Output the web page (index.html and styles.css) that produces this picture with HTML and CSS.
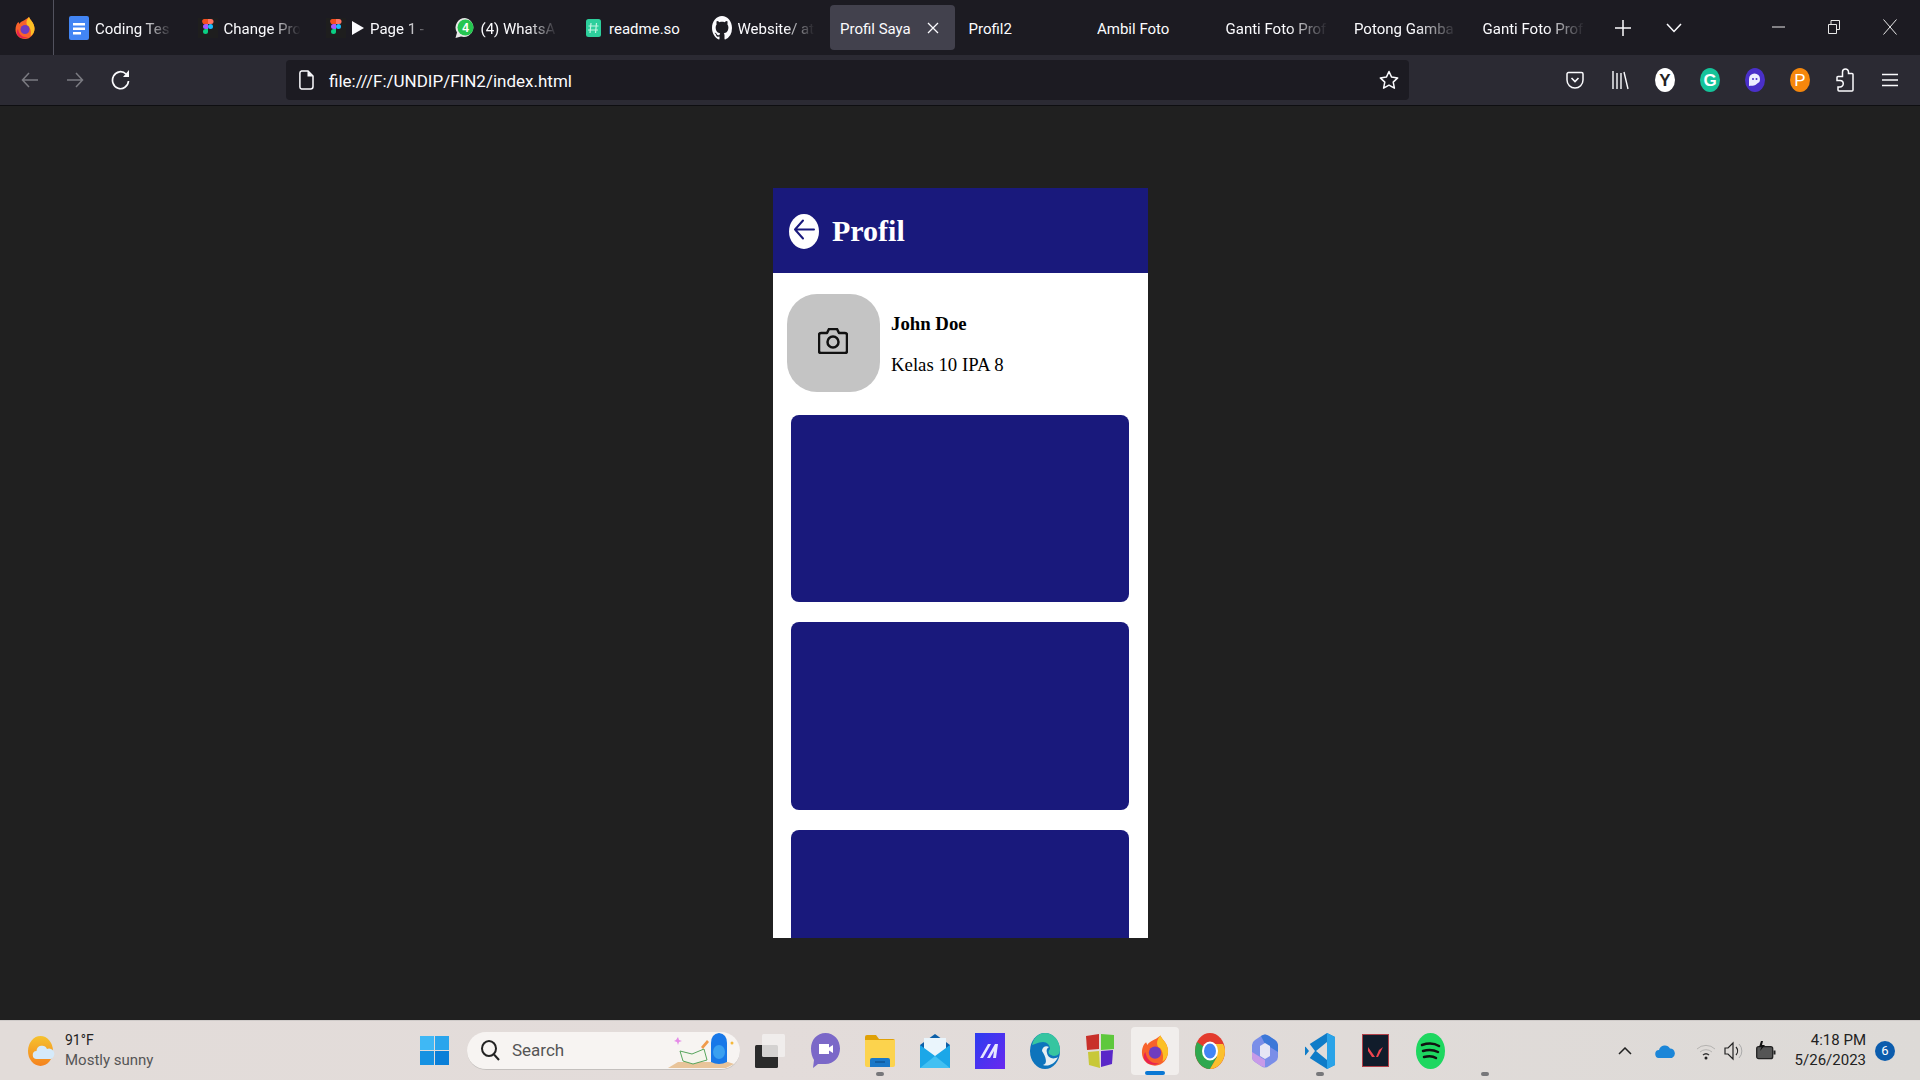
FILE: index.html
```html
<!DOCTYPE html>
<html lang="en">
<head>
    <meta charset="UTF-8">
    <meta name="viewport" content="width=device-width, initial-scale=1.0">
    <title>Profil Saya</title>
    <link rel="stylesheet" href="styles.css">
</head>
<body>
    <div class="screen">
        <!-- tab strip -->
        <div class="tabstrip">
            <div class="ff-slot">
                <svg width="20" height="24" viewBox="0 0 20 24"><path d="M14 1c1 3 5 5 5.500 11 .3 6-4 11-9.500 11S.5 19 .5 13.500C.5 10 2 7 3.500 6l1 2c1-3 5-3 9.500-7z" fill="#f8622b"/><path d="M14 1c1 3 5 5 5.500 11 .3 4-2 7-4 8 1-4 0-9-3-10.500C11 8 11 4 14 1z" fill="#fcc025"/><circle cx="10" cy="13.500" r="4.500" fill="#6f3cc0"/><path d="M3 13c1 6 5 9 10 8-3 2.500-9 1.500-11-3-.6-2 0-4 1-5z" fill="#e8234f"/></svg>
            </div>
            <div class="tab">
                <svg class="favicon" width="20" height="24" viewBox="0 0 20 24"><rect width="20" height="24" rx="2" fill="#4285f4"/><path d="M4 7h12v2.500H4zM4 11.500h12V14H4zM4 16h8v2.500H4z" fill="#fff"/></svg>
                <span class="tab-title fade">Coding Tes</span>
            </div>
            <div class="tab">
                <svg class="favicon" width="20" height="20" viewBox="0 0 20 20"><rect width="20" height="20" fill="#1e1e1e"/><path d="M6 1h4v5H7.500A2.500 2.500 0 016 1z" fill="#f24e1e"/><path d="M10 1h3a2.500 2.500 0 010 5h-3z" fill="#ff7262"/><path d="M7.500 6H10v5H7.500a2.500 2.500 0 010-5z" fill="#a259ff"/><circle cx="12.500" cy="8.500" r="2.500" fill="#1abcfe"/><path d="M7.500 11H10v2.500a2.500 2.500 0 11-2.500-2.500z" fill="#0acf83"/></svg>
                <span class="tab-title fade">Change Pro</span>
            </div>
            <div class="tab">
                <svg class="favicon" width="20" height="20" viewBox="0 0 20 20"><rect width="20" height="20" fill="#1e1e1e"/><path d="M6 1h4v5H7.500A2.500 2.500 0 016 1z" fill="#f24e1e"/><path d="M10 1h3a2.500 2.500 0 010 5h-3z" fill="#ff7262"/><path d="M7.500 6H10v5H7.500a2.500 2.500 0 010-5z" fill="#a259ff"/><circle cx="12.500" cy="8.500" r="2.500" fill="#1abcfe"/><path d="M7.500 11H10v2.500a2.500 2.500 0 11-2.500-2.500z" fill="#0acf83"/></svg>
                <svg class="play" width="12" height="14" viewBox="0 0 12 14"><path d="M0 0l12 7-12 7z" fill="#fbfbfe"/></svg>
                <span class="tab-title fade">Page 1 -</span>
            </div>
            <div class="tab">
                <svg class="favicon" width="20" height="24" viewBox="0 0 20 24"><path d="M10 2a9.500 9.500 0 00-8 14.500L.5 22l5.500-1.500A9.500 9.500 0 1010 2z" fill="#e8e8e8"/><circle cx="10.500" cy="11.500" r="8" fill="#25c650"/><text x="10.500" y="16" class="wa-count">4</text></svg>
                <span class="tab-title fade">(4) WhatsA</span>
            </div>
            <div class="tab">
                <svg class="favicon favicon-readme" width="15" height="18" viewBox="0 0 15 18"><rect width="15" height="18" rx="2.500" fill="#2dcf9c"/><path d="M5 4l-1 10M10.500 4l-1 10M2.500 7h10M2 11h10" stroke="#bff3df" stroke-width="1.200" fill="none"/></svg>
                <span class="tab-title">readme.so</span>
            </div>
            <div class="tab">
                <svg class="favicon" width="20" height="24" viewBox="0 0 16 16" preserveAspectRatio="none"><path fill="#fbfbfe" d="M8 0C3.580 0 0 3.580 0 8c0 3.540 2.290 6.530 5.470 7.590.4.070.55-.17.55-.38 0-.19-.01-.82-.01-1.490-2.010.37-2.530-.49-2.690-.94-.09-.23-.48-.94-.82-1.130-.28-.15-.68-.52-.01-.53.63-.01 1.080.58 1.230.82.72 1.210 1.870.87 2.330.66.070-.52.28-.87.51-1.070-1.780-.2-3.640-.89-3.640-3.950 0-.87.31-1.590.82-2.150-.08-.2-.36-1.020.08-2.120 0 0 .67-.21 2.200.82.64-.18 1.320-.27 2-.27.68 0 1.360.09 2 .27 1.530-1.040 2.200-.82 2.200-.82.44 1.100.16 1.920.08 2.120.51.56.82 1.270.82 2.150 0 3.070-1.870 3.750-3.650 3.950.29.25.54.73.54 1.480 0 1.070-.01 1.930-.01 2.200 0 .21.15.46.55.38A8.013 8.013 0 0016 8c0-4.420-3.580-8-8-8z"/></svg>
                <span class="tab-title fade">Website/ at</span>
            </div>
            <div class="tab active">
                <span class="tab-title">Profil Saya</span>
                <svg class="tab-close" width="12" height="12" viewBox="0 0 12 12"><path d="M1 1l10 10M11 1L1 11" stroke="#fbfbfe" stroke-width="1.300"/></svg>
            </div>
            <div class="tab"><span class="tab-title">Profil2</span></div>
            <div class="tab"><span class="tab-title">Ambil Foto</span></div>
            <div class="tab"><span class="tab-title fade">Ganti Foto Prof</span></div>
            <div class="tab"><span class="tab-title fade">Potong Gamba</span></div>
            <div class="tab"><span class="tab-title fade">Ganti Foto Prof</span></div>
            <div class="strip-btn"><svg width="16" height="16" viewBox="0 0 16 16"><path d="M8 0v16M0 8h16" stroke="#fbfbfe" stroke-width="1.500"/></svg></div>
            <div class="strip-btn chevron-btn"><svg width="16" height="10" viewBox="0 0 16 10"><path d="M1 1l7 7.500L15 1" stroke="#fbfbfe" stroke-width="1.500" fill="none"/></svg></div>
            <div class="win-btns">
                <div class="win-btn"><svg width="13" height="2" viewBox="0 0 13 2"><path d="M0 1h13" stroke="#e8e8e8" stroke-width="1"/></svg></div>
                <div class="win-btn"><svg width="12" height="14" viewBox="0 0 12 14"><path d="M.5 4.500h8v9h-8zM3 4.500V.5h8.500v9H8.500" stroke="#e8e8e8" fill="none"/></svg></div>
                <div class="win-btn"><svg width="14" height="16" viewBox="0 0 14 16"><path d="M.5.5l13 15M13.500.5L.5 15.500" stroke="#e8e8e8" fill="none"/></svg></div>
            </div>
        </div>

        <!-- toolbar -->
        <div class="toolbar">
            <div class="tool-btn"><svg width="18" height="18" viewBox="0 0 18 18"><path d="M17 9H1.500M8 2L1.500 9 8 16" stroke="#7b7b82" stroke-width="1.500" fill="none"/></svg></div>
            <div class="tool-btn"><svg width="18" height="18" viewBox="0 0 18 18"><path d="M1 9h15.500M10 2l6.500 7-6.500 7" stroke="#7b7b82" stroke-width="1.500" fill="none"/></svg></div>
            <div class="tool-btn"><svg width="19" height="22" viewBox="0 0 19 22"><path d="M15 5A8 8.500 0 1017.500 12" stroke="#fbfbfe" stroke-width="1.700" fill="none"/><path d="M18 1v7h-6z" fill="#fbfbfe"/></svg></div>
            <div class="urlbar">
                <svg width="15" height="20" viewBox="0 0 15 20"><path d="M2.500 1H9l5 5v10.500a2.500 2.500 0 01-2.500 2.500h-9A2 2 0 01.9 17V3A2 2 0 012.500 1z" stroke="#fbfbfe" stroke-width="1.500" fill="none"/><path d="M8.500 1v5.500H14" fill="#fbfbfe"/></svg>
                <span class="url-text">file:///F:/UNDIP/FIN2/index.html</span>
                <svg class="url-star" width="20" height="20" viewBox="0 0 20 20"><path d="M10 1.500l2.600 5.600 6.100.8-4.500 4.200 1.200 6.100L10 15.200l-5.400 3 1.200-6.100L1.300 7.900l6.100-.8z" stroke="#fbfbfe" stroke-width="1.500" stroke-linejoin="round" fill="none"/></svg>
            </div>
            <div class="tool-icons">
                <div class="tool-btn"><svg width="18" height="18" viewBox="0 0 18 18"><path d="M2.500 1.500h13A1.500 1.500 0 0117 3v6a8 8 0 01-16 0V3a1.500 1.500 0 011.500-1.500z" stroke="#fbfbfe" stroke-width="1.500" fill="none"/><path d="M5.500 7L9 10.500 12.500 7" stroke="#fbfbfe" stroke-width="1.600" fill="none"/></svg></div>
                <div class="tool-btn"><svg width="17" height="20" viewBox="0 0 17 20"><path d="M1 1v18M5 3v16M9 3v16M12 2l4 17" stroke="#fbfbfe" stroke-width="1.400" fill="none"/></svg></div>
                <div class="tool-btn"><svg width="20" height="24" viewBox="0 0 20 24"><ellipse cx="10" cy="12" rx="10" ry="12" fill="#fff"/><text x="10" y="18" class="ext-letter ext-dark">Y</text></svg></div>
                <div class="tool-btn"><svg width="20" height="24" viewBox="0 0 20 24"><ellipse cx="10" cy="12" rx="10" ry="12" fill="#15c39a"/><text x="10" y="18" class="ext-letter">G</text></svg></div>
                <div class="tool-btn"><svg width="20" height="24" viewBox="0 0 20 24"><ellipse cx="10" cy="12" rx="10" ry="12" fill="#4a30c9"/><path d="M4 18V11a5.500 5.500 0 0111 0c0 3-1 3.500-2 4-1 .6-2 2-4 2.500-2 .5-3.500 0-5 .5z" fill="#eef"/><circle cx="8" cy="11" r="1" fill="#4a30c9"/><circle cx="11.500" cy="11" r="1" fill="#4a30c9"/></svg></div>
                <div class="tool-btn"><svg width="20" height="24" viewBox="0 0 20 24"><ellipse cx="10" cy="12" rx="10" ry="12" fill="#f5870c"/><text x="10" y="18" class="ext-letter ext-thin">P</text></svg></div>
                <div class="tool-btn"><svg width="18" height="24" viewBox="0 0 18 24"><path d="M6.500 5.500V4a3 3 0 016 0v1.500H16a1 1 0 011 1V22a1 1 0 01-1 1H3a1 1 0 01-1-1v-3h2a3 3 0 000-6.500H1V9.500a1 1 0 011-1h4.500z" stroke="#fbfbfe" stroke-width="1.500" fill="none"/></svg></div>
                <div class="tool-btn"><svg width="16" height="14" viewBox="0 0 16 14"><path d="M0 1.500h16M0 7h16M0 12.500h16" stroke="#fbfbfe" stroke-width="1.600"/></svg></div>
            </div>
        </div>

        <!-- page content -->
        <main class="viewport">
            <div class="phone">
                <header class="phone-header">
                    <svg class="back-icon" width="30" height="35" viewBox="0 0 30 35"><ellipse cx="15" cy="17.500" rx="15" ry="17.500" fill="#fff"/><path d="M25 15.500H6M14 6.500l-8 9 8 9" stroke="#19197c" stroke-width="2" stroke-linecap="round" stroke-linejoin="round" fill="none"/></svg>
                    <h1>Profil</h1>
                </header>
                <section class="profile">
                    <div class="avatar">
                        <svg class="camera" width="30" height="26" viewBox="0 0 30 26"><path d="M3 5h6l2-4h8l2 4h6a2 2 0 012 2v16a2 2 0 01-2 2H3a2 2 0 01-2-2V7a2 2 0 012-2z" stroke="#111" stroke-width="2.500" stroke-linejoin="round" fill="none"/><circle cx="15" cy="14" r="5.500" stroke="#111" stroke-width="2.500" fill="none"/></svg>
                    </div>
                    <div class="profile-text">
                        <p class="name">John Doe</p>
                        <p class="kelas">Kelas 10 IPA 8</p>
                    </div>
                </section>
                <div class="cards">
                    <div class="card"></div>
                    <div class="card"></div>
                    <div class="card"></div>
                </div>
            </div>
        </main>

        <!-- taskbar -->
        <footer class="taskbar">
            <div class="weather">
                <svg width="28" height="30" viewBox="0 0 28 30"><defs><linearGradient id="sun" x1="0" y1="0" x2="0" y2="1"><stop offset="0" stop-color="#f5c22e"/><stop offset="1" stop-color="#f5821e"/></linearGradient></defs><ellipse cx="12.500" cy="15" rx="12.500" ry="15" fill="url(#sun)"/><path d="M9 23a4 4 0 01-.5-8 5.500 5.500 0 0110.500-2 5 5 0 014 10z" fill="#d5eafa"/></svg>
                <div class="weather-text">
                    <span class="temp">91°F</span>
                    <span class="sky">Mostly sunny</span>
                </div>
            </div>
            <div class="task-slot">
                <svg width="29" height="29" viewBox="0 0 29 29"><path d="M0 0h14v14H0z" fill="#3fb8f5"/><path d="M15 0h14v14H15z" fill="#2aa5ec"/><path d="M0 15h14v14H0z" fill="#1792e2"/><path d="M15 15h14v14H15z" fill="#0a7fd8"/></svg>
            </div>
            <div class="search">
                <svg width="19" height="21" viewBox="0 0 19 21"><ellipse cx="8" cy="8.500" rx="7" ry="7.500" stroke="#222" stroke-width="2" fill="none"/><path d="M13 14.500l5 5.500" stroke="#222" stroke-width="2"/></svg>
                <span class="search-text">Search</span>
                <svg class="search-art" width="68" height="38" viewBox="0 0 68 38"><path d="M0 37l10-6h50l6 2-8 4z" fill="#e8c49a"/><path d="M12 20l12 3 12-5 3 11-14 4-10-3z" fill="#f5f5ec" stroke="#58a55c"/><path d="M33 16l6-7 2 2-6 7z" fill="#f09a4a"/><path d="M8 9l2-3 1 3 3 1-3 1-1 3-1-3-3-1z" fill="#e58ae8"/><path d="M43 31V12q0-9 8-10 8 1 8 10v19q-8 4-16 0z" fill="#1878e8"/><ellipse cx="51" cy="21" rx="6" ry="7" fill="#3aa0f0"/><circle cx="64" cy="12" r="1.500" fill="#f5b83a"/></svg>
            </div>
            <div class="task-apps">
                <div class="task-slot">
                    <svg width="30" height="34" viewBox="0 0 30 34"><rect x="0" y="11" width="23" height="23" rx="1.500" fill="#2a2a2a"/><rect x="7" y="0" width="23" height="23" rx="1.500" fill="#f2f0ef" fill-opacity=".85"/></svg>
                </div>
                <div class="task-slot">
                    <svg width="29" height="35" viewBox="0 0 29 35"><path d="M14.500 0C23 0 29 7 29 15.500S23 31 14.500 31H7l-5 4 1-8C1 24 0 20 0 15.500 0 7 6 0 14.500 0z" fill="#7b68c8"/><path d="M8 11h10v10H8zM18 14.500l4-2.500v8l-4-2.500z" fill="#fff"/></svg>
                </div>
                <div class="task-slot running">
                    <svg width="30" height="32" viewBox="0 0 30 32"><path d="M0 2a2 2 0 012-2h9l3 4H28a2 2 0 012 2v4H0z" fill="#e0a106"/><path d="M0 5h30v25a2 2 0 01-2 2H2a2 2 0 01-2-2z" fill="#fcd34d"/><path d="M5 25a2 2 0 012-2h16a2 2 0 012 2v7H5z" fill="#1a78c8"/><path d="M10 27h10" stroke="#0d4f8c" stroke-width="1.200"/></svg>
                </div>
                <div class="task-slot">
                    <svg width="30" height="34" viewBox="0 0 30 34"><path d="M0 11L15 0l15 11v23H0z" fill="#0c5fa8"/><path d="M4 4h22v18H4z" fill="#eaf5fc"/><path d="M0 11l15 11 15-11v23H0z" fill="#1ba7e8"/><path d="M0 34l15-12 15 12z" fill="#42c0f2"/></svg>
                </div>
                <div class="task-slot">
                    <svg width="30" height="36" viewBox="0 0 30 36"><defs><linearGradient id="arc" x1="0" y1="0" x2="1" y2="1"><stop offset="0" stop-color="#2b3cf0"/><stop offset="1" stop-color="#6a28ef"/></linearGradient></defs><rect width="30" height="36" fill="url(#arc)"/><path d="M5 25L13 11h3L8 25zM12 25l8-14h3l-2 14h-3l1-7-4 7z" fill="#e6e6ff"/></svg>
                </div>
                <div class="task-slot">
                    <svg width="30" height="36" viewBox="0 0 30 36"><ellipse cx="15" cy="18" rx="15" ry="18" fill="#0e74bc"/><path d="M2 12C4 3 10 0 15 0c8 0 15 7 15 17 0 6-6 7-9 5-3-1-3-4-1-6 0-4-3-7-7-7-5 0-9 3-11 3z" fill="#36c5a0"/><path d="M12 18c0-4 4-6 7-4-2 1-3 3-2 6 1 5 6 7 11 4-3 7-10 10-15 8 5-1 3-8-1-14z" fill="#e8eef2"/></svg>
                </div>
                <div class="task-slot">
                    <svg width="28" height="36" viewBox="0 0 28 36"><path d="M0 3l13-2v15L1 17z" fill="#c8302a"/><path d="M15 1l13 1v14l-13 1z" fill="#5ec83c"/><path d="M2 19l11-1 1 17-11-3z" fill="#c8c838"/><path d="M15 18l12-1-1 14-11 3z" fill="#5a28c8"/></svg>
                </div>
                <div class="task-slot active-app">
                    <svg width="28" height="33" viewBox="0 0 20 24"><path d="M14 1c1 3 5 5 5.500 11 .3 6-4 11-9.500 11S.5 19 .5 13.500C.5 10 2 7 3.500 6l1 2c1-3 5-3 9.500-7z" fill="#f8622b"/><path d="M14 1c1 3 5 5 5.500 11 .3 4-2 7-4 8 1-4 0-9-3-10.500C11 8 11 4 14 1z" fill="#fcc025"/><circle cx="10" cy="13.500" r="4.500" fill="#6f3cc0"/><path d="M3 13c1 6 5 9 10 8-3 2.500-9 1.500-11-3-.6-2 0-4 1-5z" fill="#e8234f"/></svg>
                </div>
                <div class="task-slot">
                    <svg width="30" height="36" viewBox="0 0 30 36"><ellipse cx="15" cy="18" rx="15" ry="18" fill="#e33b2e"/><path d="M15 18L2 9A15 18 0 000 18c0 10 7 18 15 18l7-12z" fill="#2fa84f"/><path d="M15 18l7 6-7 12c8 0 15-8 15-18 0-3-1-5-2-7H15z" fill="#fbc02d"/><ellipse cx="15" cy="18" rx="8" ry="9.500" fill="#fff"/><ellipse cx="15" cy="18" rx="6" ry="7.500" fill="#4285f4"/></svg>
                </div>
                <div class="task-slot">
                    <svg width="26" height="34" viewBox="0 0 26 34"><path d="M9 2q4-3 8 0l6 4q3 2 3 5v12q0 3-3 5l-6 4q-4 3-8 0l-6-4q-3-2-3-5V11q0-3 3-5z" fill="#7a8ee8"/><path d="M9 2q4-3 8 0l6 4q3 2 3 5v7L13 10z" fill="#3c78d8"/><path d="M0 18l13 8v7q-2 0-4-1l-6-4q-3-2-3-5z" fill="#c89ae8"/><path d="M8 12l5-3 5 3v10l-5 3-5-3z" fill="#e6e6f5"/></svg>
                </div>
                <div class="task-slot running">
                    <svg width="30" height="36" viewBox="0 0 30 36"><path d="M22 0l8 4v28l-8 4L0 22V14z" fill="#0f7cc8"/><path d="M22 0l8 4v28l-8 4z" fill="#2aa3e8"/><path d="M22 9L11 18l11 9zM0 13l4-3 6 8-6 8-4-3 4-5z" fill="#e0dcda"/></svg>
                </div>
                <div class="task-slot">
                    <svg width="27" height="33" viewBox="0 0 27 33"><rect x=".5" y=".5" width="26" height="32" fill="#111c2b" stroke="#b04048"/><path d="M6 13l7 10h-3l-4-6zM21 13l-5 10h-2l3-7z" fill="#f0454f"/></svg>
                </div>
                <div class="task-slot">
                    <svg width="29" height="36" viewBox="0 0 29 36"><ellipse cx="14.500" cy="18" rx="14.500" ry="18" fill="#1ed760"/><path d="M6 12c6-2 12-2 17 1M7 18c5-1.500 10-1.500 15 1M8 24c4-1 9-1 12 1" stroke="#111" stroke-width="2.500" stroke-linecap="round" fill="none"/></svg>
                </div>
                <div class="task-slot running"></div>
            </div>
            <div class="tray">
                <svg class="tray-chevron" width="14" height="8" viewBox="0 0 14 8"><path d="M1 7l6-6 6 6" stroke="#222" stroke-width="1.500" fill="none"/></svg>
                <svg class="tray-cloud" width="21" height="15" viewBox="0 0 21 15"><path d="M4.500 15a4 4 0 01-.500-8 6 6 0 0111-1.500A5 5 0 0117 15z" fill="#1b86d8"/></svg>
                <svg class="tray-wifi" width="20" height="18" viewBox="0 0 20 18"><path d="M1 7a13 13 0 0118 0M4 10a9 9 0 0112 0" stroke="#b5b3b1" fill="none"/><path d="M7 13a4.500 4.500 0 016 0" stroke="#333" stroke-width="1.400" fill="none"/><circle cx="10" cy="16" r="1.500" fill="#222"/></svg>
                <svg class="tray-vol" width="20" height="20" viewBox="0 0 20 20"><path d="M1 7h3l5-5v16l-5-5H1z" stroke="#222" stroke-width="1.200" fill="none"/><path d="M12 6a6 6 0 010 8" stroke="#222" stroke-width="1.200" fill="none"/><path d="M15 3a10 10 0 010 14" stroke="#aaa" fill="none"/></svg>
                <svg class="tray-batt" width="20" height="20" viewBox="0 0 20 20"><rect x=".7" y="5.700" width="16" height="12" rx="2" stroke="#222" stroke-width="1.300" fill="#555"/><rect x="17.500" y="9.500" width="2" height="4" fill="#222"/><path d="M5 0L3 6h2.500L4 10l5-6H6l1-4z" fill="#111"/></svg>
                <div class="clock">
                    <span>4:18 PM</span>
                    <span>5/26/2023</span>
                </div>
                <span class="notif">6</span>
            </div>
        </footer>
    </div>
</body>
</html>
```

FILE: styles.css
```css
* {
    box-sizing: border-box;
}
body {
    margin: 0;
    background-color: #202020;
    font-family: 'Roboto', 'Open Sans', sans-serif;
}
.screen {
    display: flex;
    flex-direction: column;
    width: 1920px;
    height: 1080px;
    overflow: hidden;
}
svg {
    display: block;
    flex: none;
}

/* tabs */
.tabstrip {
    display: flex;
    align-items: center;
    height: 55px;
    padding: 5px 0;
    background-color: #1c1b22;
}
.ff-slot {
    flex: none;
    display: flex;
    align-items: center;
    height: 55px;
    width: 54px;
    margin: -5px 3px -5px 0;
    padding-left: 15px;
    border-right: 1px solid #52525e;
}
.tab {
    flex: 0 0 128.5px;
    min-width: 0;
    display: flex;
    align-items: center;
    height: 45px;
    padding: 2px 12px 0;
    color: #fbfbfe;
    font-size: 15px;
}
.tab.active {
    flex-basis: 124.5px;
    margin: 0 2px;
    padding: 2px 10px 0;
    background-color: #42414d;
    border-radius: 4px;
    justify-content: space-between;
}
.favicon {
    margin: -2px 6px 0 0;
}
.favicon-readme {
    margin: -2px 8px 0 3px;
}
.play {
    margin: -2px 6px 0 0;
}
.tab-title {
    white-space: nowrap;
    overflow: hidden;
    flex: 1;
    min-width: 0;
}
.tab.active .tab-title {
    flex: none;
}
.fade {
    -webkit-mask-image: linear-gradient(to right, #000 60%, transparent 98%);
    mask-image: linear-gradient(to right, #000 60%, transparent 98%);
}
.tab-close {
    margin: -2px 6px 0 0;
}
.strip-btn {
    flex: 0 0 48px;
    display: flex;
    justify-content: center;
}
.chevron-btn {
    padding-left: 6px;
}
.win-btns {
    display: flex;
    margin-left: auto;
    margin-right: 2px;
}
.win-btn {
    width: 56px;
    display: flex;
    justify-content: center;
    align-items: center;
    height: 40px;
    margin-top: -2px;
}

/* toolbar */
.toolbar {
    display: flex;
    align-items: center;
    height: 51px;
    padding: 0 7.5px 1px;
    background-color: #2b2a33;
    border-bottom: 1px solid #0e0e11;
}
.tool-btn {
    flex: 0 0 45px;
    display: flex;
    align-items: center;
    justify-content: center;
}
.urlbar {
    display: flex;
    align-items: center;
    width: 1123px;
    height: 40px;
    margin-left: 143.5px;
    padding: 0 10px 0 13px;
    background-color: #1c1b22;
    border-radius: 4px;
    color: #fbfbfe;
}
.url-text {
    margin: 2px 0 0 15px;
    font-size: 17px;
}
.url-star {
    margin-left: auto;
}
.tool-icons {
    display: flex;
    margin-left: auto;
}
.ext-letter {
    font-family: 'Liberation Sans', sans-serif;
    font-size: 17px;
    font-weight: bold;
    fill: #fff;
    text-anchor: middle;
}
.ext-dark {
    fill: #222;
}
.ext-thin {
    font-weight: normal;
}
.wa-count {
    font-family: 'Liberation Sans', sans-serif;
    font-size: 12px;
    font-weight: bold;
    fill: #fff;
    text-anchor: middle;
}

/* page */
.viewport {
    flex: 1;
    display: flex;
    justify-content: center;
    padding-top: 82px;
    padding-left: 1px;
    min-height: 0;
    background-color: #202020;
}
.phone {
    width: 375px;
    height: 750px;
    background-color: #fff;
    overflow: hidden;
    font-family: 'Liberation Serif', serif;
    color: #000;
}
.phone-header {
    display: flex;
    align-items: center;
    height: 85px;
    padding: 0 16px;
    background-color: #19197c;
    color: #fff;
}
.back-icon {
    margin-top: 2px;
}
.phone-header h1 {
    margin: 0 0 0 13px;
    font-size: 30px;
    font-weight: bold;
}
.profile {
    display: flex;
    align-items: center;
    margin-top: 21px;
    padding-left: 14px;
}
.avatar {
    display: flex;
    align-items: center;
    justify-content: center;
    width: 93px;
    height: 98px;
    background-color: #c4c4c4;
    border-radius: 30px;
}
.camera {
    margin: 0 2px 5px 0;
}
.profile-text {
    margin: 2px 0 0 11px;
    font-size: 18.8px;
}
.profile-text p {
    margin: 0;
}
.name {
    font-weight: bold;
}
.profile-text .kelas {
    margin-top: 19px;
}
.cards {
    display: flex;
    flex-direction: column;
    gap: 20px;
    margin-top: 23px;
    padding-left: 18px;
}
.card {
    flex: none;
    width: 338px;
    height: 187.3px;
    background-color: #19197c;
    border-radius: 8px;
}

/* taskbar */
.taskbar {
    display: flex;
    align-items: center;
    height: 60px;
    background: linear-gradient(90deg, #e2dcd9, #e3dcda 40%, #dddad7);
    border-top: 1px solid #cfcbc9;
    color: #222;
}
.weather {
    flex: 0 0 407px;
    display: flex;
    align-items: center;
    padding-left: 28px;
}
.weather-text {
    display: flex;
    flex-direction: column;
    margin: -2px 0 0 9px;
    font-size: 15px;
    line-height: 20px;
}
.temp {
    font-size: 14px;
}
.sky {
    color: #555;
}
.task-slot {
    position: relative;
    flex: 0 0 55px;
    display: flex;
    align-items: center;
    justify-content: center;
    height: 48px;
}
.search {
    flex: 0 0 273px;
    display: flex;
    align-items: center;
    height: 38px;
    margin-left: 5px;
    padding-left: 14px;
    background-color: #f7f4f2;
    border-radius: 19px;
    border-bottom: 1px solid #c4c0be;
}
.search-text {
    margin-left: 12px;
    font-size: 17px;
    color: #555;
}
.search-art {
    margin-left: auto;
    margin-right: 4px;
}
.task-apps {
    display: flex;
    margin-left: 2.5px;
}
.task-slot.running::after {
    content: "";
    position: absolute;
    bottom: -1px;
    left: 23.5px;
    width: 8px;
    height: 4px;
    background-color: #77777a;
    border-radius: 2px;
}
.task-slot.active-app {
    flex-basis: 48px;
    margin: 0 3.5px;
    background-color: #f1eeec;
    border-radius: 4px;
}
.active-app::after {
    content: "";
    position: absolute;
    bottom: 0;
    left: 14px;
    width: 20px;
    height: 4px;
    background-color: #0a78d4;
    border-radius: 2px;
}
.tray {
    display: flex;
    align-items: center;
    margin-left: auto;
    padding-right: 25px;
}
.tray-cloud {
    margin-left: 23px;
}
.tray-wifi {
    margin-left: 20px;
}
.tray-vol {
    margin-left: 8px;
}
.tray-batt {
    margin-left: 12px;
}
.clock {
    display: flex;
    flex-direction: column;
    align-items: flex-end;
    width: 90px;
    margin-top: -2px;
    font-size: 15px;
    line-height: 20px;
}
.notif {
    display: flex;
    align-items: center;
    justify-content: center;
    width: 20px;
    height: 20px;
    margin-left: 9px;
    background-color: #0b5cad;
    border-radius: 50%;
    color: #fff;
    font-size: 13px;
}
```
